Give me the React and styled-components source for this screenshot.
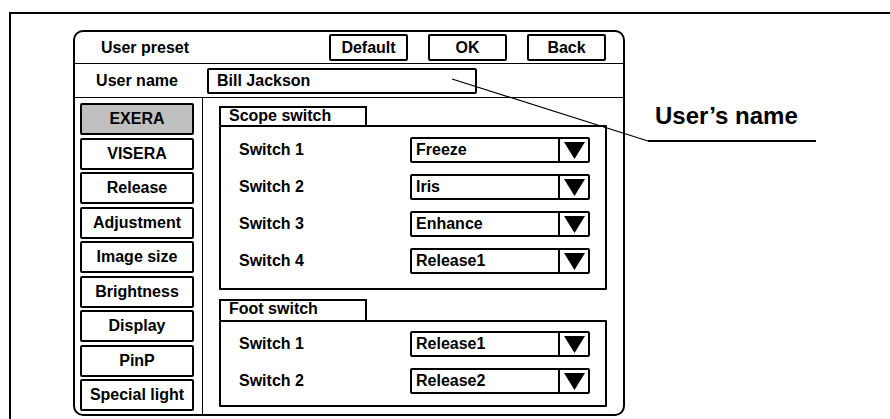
import React from "react";
import styled, { createGlobalStyle } from "styled-components";

const GlobalStyle = createGlobalStyle`
  html, body { margin: 0; padding: 0; background: #fff; }
  body { font-family: "Liberation Sans", Arial, sans-serif; color: #000; }
  * { box-sizing: border-box; }
`;

const Page = styled.div`
  width: 890px;
  height: 419px;
  overflow: hidden;
  background: #fff;
  padding: 12px 0 0 9px;
  display: flex;
`;

const Frame = styled.div`
  position: relative;
  flex: 1;
  display: flex;
  align-items: flex-start;
  border-top: 2px solid #000;
  border-left: 2px solid #000;
  padding: 16px 0 0 62px;
`;

const Panel = styled.div`
  width: 552px;
  height: 386px;
  border: 2px solid #000;
  border-radius: 10px;
  display: flex;
  flex-direction: column;
  font-weight: 700;
  font-size: 16px;
`;

const Header = styled.div`
  height: 32px;
  border-bottom: 1px solid #000;
  display: flex;
  align-items: center;
  padding: 0 17px 0 26px;
`;

const Title = styled.div`
  font-size: 16px;
  font-weight: 700;
`;

const ButtonGroup = styled.div`
  margin-left: auto;
  display: flex;
  gap: 20px;
`;

const HeadButton = styled.div`
  width: 79px;
  height: 27px;
  border: 2px solid #000;
  border-radius: 2px;
  display: flex;
  align-items: center;
  justify-content: center;
  font-size: 16px;
  font-weight: 700;
  background: #fff;
`;

const NameRow = styled.div`
  height: 34px;
  border-bottom: 1px solid #000;
  display: flex;
  align-items: center;
`;

const NameLabel = styled.div`
  width: 128px;
  text-align: center;
  padding-right: 4px;
`;

const NameField = styled.div`
  margin-left: 4px;
  width: 270px;
  height: 26px;
  border: 2px solid #000;
  border-radius: 2px;
  padding-left: 8px;
  line-height: 22px;
`;

const Body = styled.div`
  flex: 1;
  display: flex;
  min-height: 0;
`;

const Nav = styled.div`
  width: 128px;
  border-right: 1px solid #000;
  padding: 5px 8px 3px 5px;
  display: flex;
  flex-direction: column;
  justify-content: space-between;
`;

const NavButton = styled.div`
  height: 32px;
  border: 2px solid #000;
  border-radius: 2px;
  display: flex;
  align-items: center;
  justify-content: center;
  background: ${(p) => (p.$active ? "#c0c0c0" : "#fff")};
  white-space: nowrap;
`;

const Content = styled.div`
  flex: 1;
  padding: 8px 16px 0 16px;
  display: flex;
  flex-direction: column;
`;

const Group = styled.div`
  display: flex;
  flex-direction: column;
  margin-top: ${(p) => p.$gap || 0}px;
`;

const Tab = styled.div`
  width: 148px;
  height: ${(p) => p.$h}px;
  border: 2px solid #000;
  border-bottom: none;
  padding-left: 8px;
  line-height: 16px;
  white-space: nowrap;
`;

const GroupBox = styled.div`
  border: 2px solid #000;
  border-radius: 1px;
  padding: ${(p) => p.$pt}px 15px ${(p) => p.$pb}px 18px;
  display: flex;
  flex-direction: column;
  gap: 11px;
`;

const Row = styled.div`
  height: 26px;
  display: flex;
  align-items: center;
  justify-content: space-between;
`;

const RowLabel = styled.div`
  white-space: nowrap;
`;

const Select = styled.div`
  width: 180px;
  height: 26px;
  border: 2px solid #000;
  border-radius: 2px;
  display: flex;
`;

const SelectText = styled.div`
  flex: 1;
  padding-left: 4px;
  line-height: 22px;
`;

const ArrowCell = styled.div`
  width: 30px;
  border-left: 2px solid #000;
  display: flex;
  align-items: center;
  justify-content: center;
`;

const Callout = styled.div`
  margin: 74px 0 0 23px;
  display: flex;
  flex-direction: column;
`;

const CalloutLabel = styled.div`
  padding-left: 7px;
  font-size: 24px;
  line-height: 24px;
  font-weight: 700;
  white-space: nowrap;
`;

const CalloutRule = styled.div`
  width: 168px;
  margin-top: 12px;
  border-top: 2px solid #000;
`;

const Leader = styled.svg`
  position: absolute;
  left: 0;
  top: 0;
  width: 100%;
  height: 100%;
  pointer-events: none;
  overflow: visible;
`;

const Arrow = () => (
  <svg width="21" height="17" viewBox="0 0 21 17">
    <polygon points="0,0 21,0 10.5,17" fill="#000" />
  </svg>
);

const Dropdown = ({ value }) => (
  <Select>
    <SelectText>{value}</SelectText>
    <ArrowCell>
      <Arrow />
    </ArrowCell>
  </Select>
);

const navItems = [
  "EXERA",
  "VISERA",
  "Release",
  "Adjustment",
  "Image size",
  "Brightness",
  "Display",
  "PinP",
  "Special light",
];

const scope = [
  ["Switch 1", "Freeze"],
  ["Switch 2", "Iris"],
  ["Switch 3", "Enhance"],
  ["Switch 4", "Release1"],
];

const foot = [
  ["Switch 1", "Release1"],
  ["Switch 2", "Release2"],
];

export default function App() {
  return (
    <>
      <GlobalStyle />
      <Page>
        <Frame>
          <Panel>
            <Header>
              <Title>User preset</Title>
              <ButtonGroup>
                <HeadButton>Default</HeadButton>
                <HeadButton>OK</HeadButton>
                <HeadButton>Back</HeadButton>
              </ButtonGroup>
            </Header>
            <NameRow>
              <NameLabel>User name</NameLabel>
              <NameField>Bill Jackson</NameField>
            </NameRow>
            <Body>
              <Nav>
                {navItems.map((n, i) => (
                  <NavButton key={n} $active={i === 0}>
                    {n}
                  </NavButton>
                ))}
              </Nav>
              <Content>
                <Group>
                  <Tab $h={19}>Scope switch</Tab>
                  <GroupBox $pt={10} $pb={14}>
                    {scope.map(([l, v]) => (
                      <Row key={l}>
                        <RowLabel>{l}</RowLabel>
                        <Dropdown value={v} />
                      </Row>
                    ))}
                  </GroupBox>
                </Group>
                <Group $gap={9}>
                  <Tab $h={21}>Foot switch</Tab>
                  <GroupBox $pt={9} $pb={11}>
                    {foot.map(([l, v]) => (
                      <Row key={l}>
                        <RowLabel>{l}</RowLabel>
                        <Dropdown value={v} />
                      </Row>
                    ))}
                  </GroupBox>
                </Group>
              </Content>
            </Body>
          </Panel>
          <Callout>
            <CalloutLabel>User’s name</CalloutLabel>
            <CalloutRule />
          </Callout>
          <Leader>
            <line x1="441" y1="65" x2="637" y2="127" stroke="#000" strokeWidth="1.2" />
          </Leader>
        </Frame>
      </Page>
    </>
  );
}
